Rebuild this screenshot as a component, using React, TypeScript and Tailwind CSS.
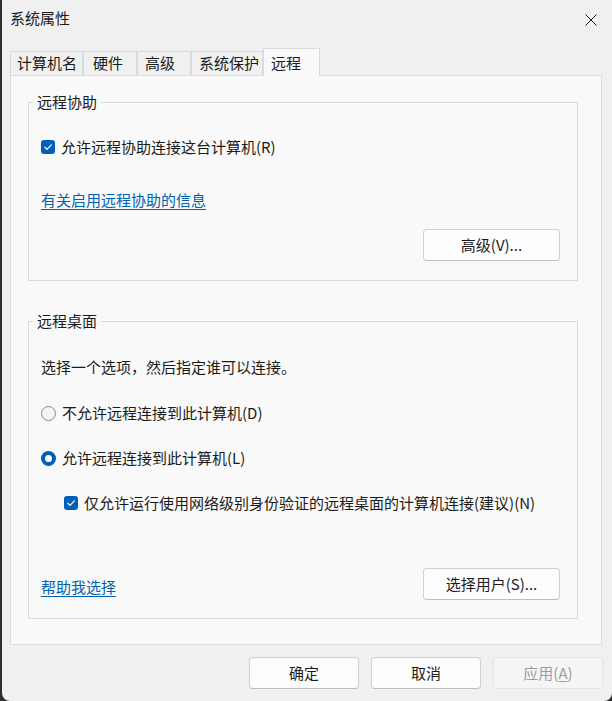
import React from 'react';

const font = { fontFamily: '"Noto Sans CJK SC", "Noto Sans", sans-serif' };

const Check = ({ className = '' }: { className?: string }) => (
  <span className={`flex h-[14px] w-[14px] shrink-0 items-center justify-center rounded-[3px] bg-[#005fb8] ${className}`}>
    <svg width="10" height="10" viewBox="0 0 10 10" fill="none">
      <path d="M1.8 5.2 L4 7.3 L8.3 2.8" stroke="#ffffff" strokeWidth="1.2" strokeLinecap="round" strokeLinejoin="round" />
    </svg>
  </span>
);

const Radio = ({ checked }: { checked?: boolean }) =>
  checked ? (
    <span className="flex h-[15px] w-[15px] shrink-0 items-center justify-center rounded-full bg-[#005fb8]">
      <span className="h-[7px] w-[7px] rounded-full bg-white" />
    </span>
  ) : (
    <span className="h-[15px] w-[15px] shrink-0 rounded-full border border-[#8a8a8a] bg-[#f4f4f4]" />
  );

const Btn = ({ children, className = '' }: { children: React.ReactNode; className?: string }) => (
  <button
    className={`flex h-[32px] items-center justify-center rounded-[4px] border border-[#d0d0d0] border-b-[#bdbdbd] bg-[#fdfdfd] text-[15px] leading-[20px] text-[#1b1b1b] ${className}`}
  >
    {children}
  </button>
);

const tabs = [
  { label: '计算机名', w: 'w-[73px]', pl: 'pl-[6px]' },
  { label: '硬件', w: 'w-[54px]', pl: 'pl-[9px]' },
  { label: '高级', w: 'w-[54px]', pl: 'pl-[7px]' },
  { label: '系统保护', w: 'w-[72px]', pl: 'pl-[7px]' },
];

export default function App() {
  return (
    <div className="flex h-[701px] w-[612px] bg-[#2e2e2e]" style={font}>
      <div className="ml-[2px] flex h-[701px] w-[610px] flex-col rounded-b-[8px] bg-[#f0f0f0] text-[15px] leading-[20px] text-[#1b1b1b]">
        {/* title bar */}
        <div className="flex h-[48px] justify-between pl-[8px] pr-[15px]">
          <span className="pt-[8px]">系统属性</span>
          <svg className="mt-[14px]" width="12" height="12" viewBox="0 0 12 12" fill="none">
            <path d="M0.5 0.5 L11.5 11.5 M11.5 0.5 L0.5 11.5" stroke="#1b1b1b" strokeWidth="1" />
          </svg>
        </div>

        {/* tabs */}
        <div className="flex h-[28px] items-end pl-[8px]">
          {tabs.map((t) => (
            <div key={t.label} className={`h-[25px] border border-b-0 border-[#dadada] bg-[#f0f0f0] pt-[1px] ${t.w} ${t.pl}`}>
              {t.label}
            </div>
          ))}
          <div className="relative z-10 h-[28px] w-[57px] border border-b-0 border-[#dadada] bg-[#f9f9f9] pl-[7px] pt-[4px]">
            远程
          </div>
        </div>

        {/* panel */}
        <div className="-mt-px ml-[8px] flex w-[592px] flex-col border border-[#dcdcdc] bg-[#f9f9f9] pb-[25px] pl-[17px] pt-[16px]">
          <fieldset className="w-[550px] border border-[#dadada] p-0">
            <legend className="ml-[4px] px-[4px] leading-[20px]">远程协助</legend>
            <div className="flex flex-col pb-[19px] pl-[12px] pr-[17px]">
              <div className="mt-[25px] flex items-center gap-[6px]">
                <Check />
                <span>允许远程协助连接这台计算机(R)</span>
              </div>
              <a className="mt-[33px] self-start text-[#0063b1] underline underline-offset-[3px]">有关启用远程协助的信息</a>
              <div className="mt-[19px] flex justify-end">
                <Btn className="w-[137px]">高级(V)...</Btn>
              </div>
            </div>
          </fieldset>

          <fieldset className="mt-[30px] w-[550px] border border-[#dadada] p-0">
            <legend className="ml-[4px] px-[4px] leading-[20px]">远程桌面</legend>
            <div className="flex flex-col pb-[18px] pl-[12px] pr-[17px]">
              <span className="mt-[26px]">选择一个选项，然后指定谁可以连接。</span>
              <div className="mt-[26px] flex items-center gap-[6px]">
                <Radio />
                <span>不允许远程连接到此计算机(D)</span>
              </div>
              <div className="mt-[25px] flex items-center gap-[6px]">
                <Radio checked />
                <span>允许远程连接到此计算机(L)</span>
              </div>
              <div className="ml-[23px] mt-[25px] flex items-center gap-[6px]">
                <Check />
                <span>仅允许运行使用网络级别身份验证的远程桌面的计算机连接(建议)(N)</span>
              </div>
              <div className="mt-[55px] flex items-center justify-between">
                <a className="mt-[6px] text-[#0063b1] underline underline-offset-[3px]">帮助我选择</a>
                <Btn className="w-[137px]">选择用户(S)...</Btn>
              </div>
            </div>
          </fieldset>
        </div>

        {/* footer buttons */}
        <div className="mt-[12px] flex justify-end gap-[12px] pr-[9px]">
          <Btn className="w-[110px] border-[#0067c0] border-b-[#0067c0]">确定</Btn>
          <Btn className="w-[110px]">取消</Btn>
          <button className="flex h-[32px] w-[110px] items-center justify-center rounded-[4px] border border-[#e5e5e5] bg-[#f5f5f5] text-[15px] leading-[20px] text-[#9d9d9d]">
            应用(<span className="underline underline-offset-[2px]">A</span>)
          </button>
        </div>
      </div>
    </div>
  );
}
